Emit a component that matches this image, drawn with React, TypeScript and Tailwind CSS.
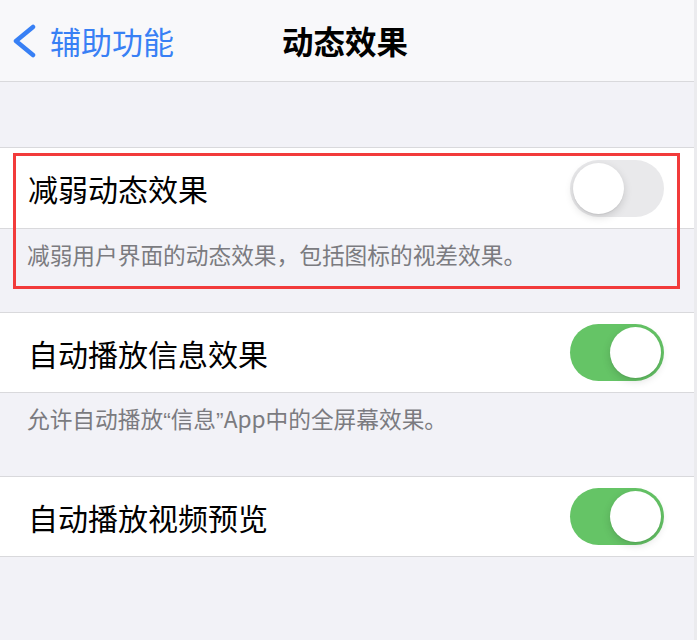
import React from "react";

const font = { fontFamily: '"Noto Sans CJK SC", "Noto Sans", sans-serif' };

function Toggle({ on }: { on: boolean }) {
  return (
    <div
      className={
        "relative w-[94px] h-[57px] rounded-full shrink-0 " +
        (on ? "bg-[#65c466]" : "bg-[#e9e9eb]")
      }
    >
      <div
        className={
          "absolute top-[3px] w-[51px] h-[51px] rounded-full bg-white shadow-[0_3px_8px_rgba(0,0,0,0.15),0_1px_1px_rgba(0,0,0,0.06)] " +
          (on ? "right-[3px]" : "left-[3px]")
        }
      />
    </div>
  );
}

function Cell({ title, on, h }: { title: string; on: boolean; h: string }) {
  return (
    <div
      className={
        "bg-white border-y-[1.5px] border-[#d9d9dc] flex items-center justify-between pl-[28px] pr-[30px] " +
        h
      }
    >
      <span className="text-[30px] leading-none text-black">{title}</span>
      <Toggle on={on} />
    </div>
  );
}

function Footer({ children, h }: { children: React.ReactNode; h: string }) {
  return (
    <div className={"pl-[27px] pt-[12px] " + h}>
      <span className="text-[22.7px] leading-[28px] text-[#7b7b80]">{children}</span>
    </div>
  );
}

const q = { fontFamily: '"Liberation Sans", sans-serif' };

export default function App() {
  return (
    <div className="w-[697px] h-[640px] bg-[#f2f2f7] flex overflow-hidden relative" style={font}>
      <div className="w-[694px] flex flex-col">
        <div className="h-[82px] shrink-0 bg-[#f8f8fa] border-b-[1.5px] border-[#d9d9dc] relative flex items-center">
          <div className="flex items-center pl-[12px]">
            <svg width="24" height="34" viewBox="0 0 24 34" className="shrink-0">
              <polyline
                points="21,3 4,17 21,31"
                fill="none"
                stroke="#3880f5"
                strokeWidth="4.5"
                strokeLinecap="round"
                strokeLinejoin="round"
              />
            </svg>
            <span className="ml-[14px] text-[31px] leading-none text-[#3880f5]">辅助功能</span>
          </div>
          <span className="absolute left-[282px] top-1/2 -translate-y-1/2 text-[31.5px] leading-none font-semibold text-black">
            动态效果
          </span>
        </div>
        <div className="h-[65px] shrink-0" />
        <Cell title="减弱动态效果" on={false} h="h-[82px]" />
        <Footer h="h-[83px]">减弱用户界面的动态效果，包括图标的视差效果。</Footer>
        <Cell title="自动播放信息效果" on={true} h="h-[81px]" />
        <Footer h="h-[83px]">
          允许自动播放<span style={q}>“</span>信息<span style={q}>”</span>App中的全屏幕效果。
        </Footer>
        <Cell title="自动播放视频预览" on={true} h="h-[81px]" />
      </div>
      <div className="w-[3px] bg-[#ebebee]" />
      <div className="absolute left-[13px] top-[153px] w-[667px] h-[136px] border-[3px] border-[#f23b3b] pointer-events-none" />
    </div>
  );
}
